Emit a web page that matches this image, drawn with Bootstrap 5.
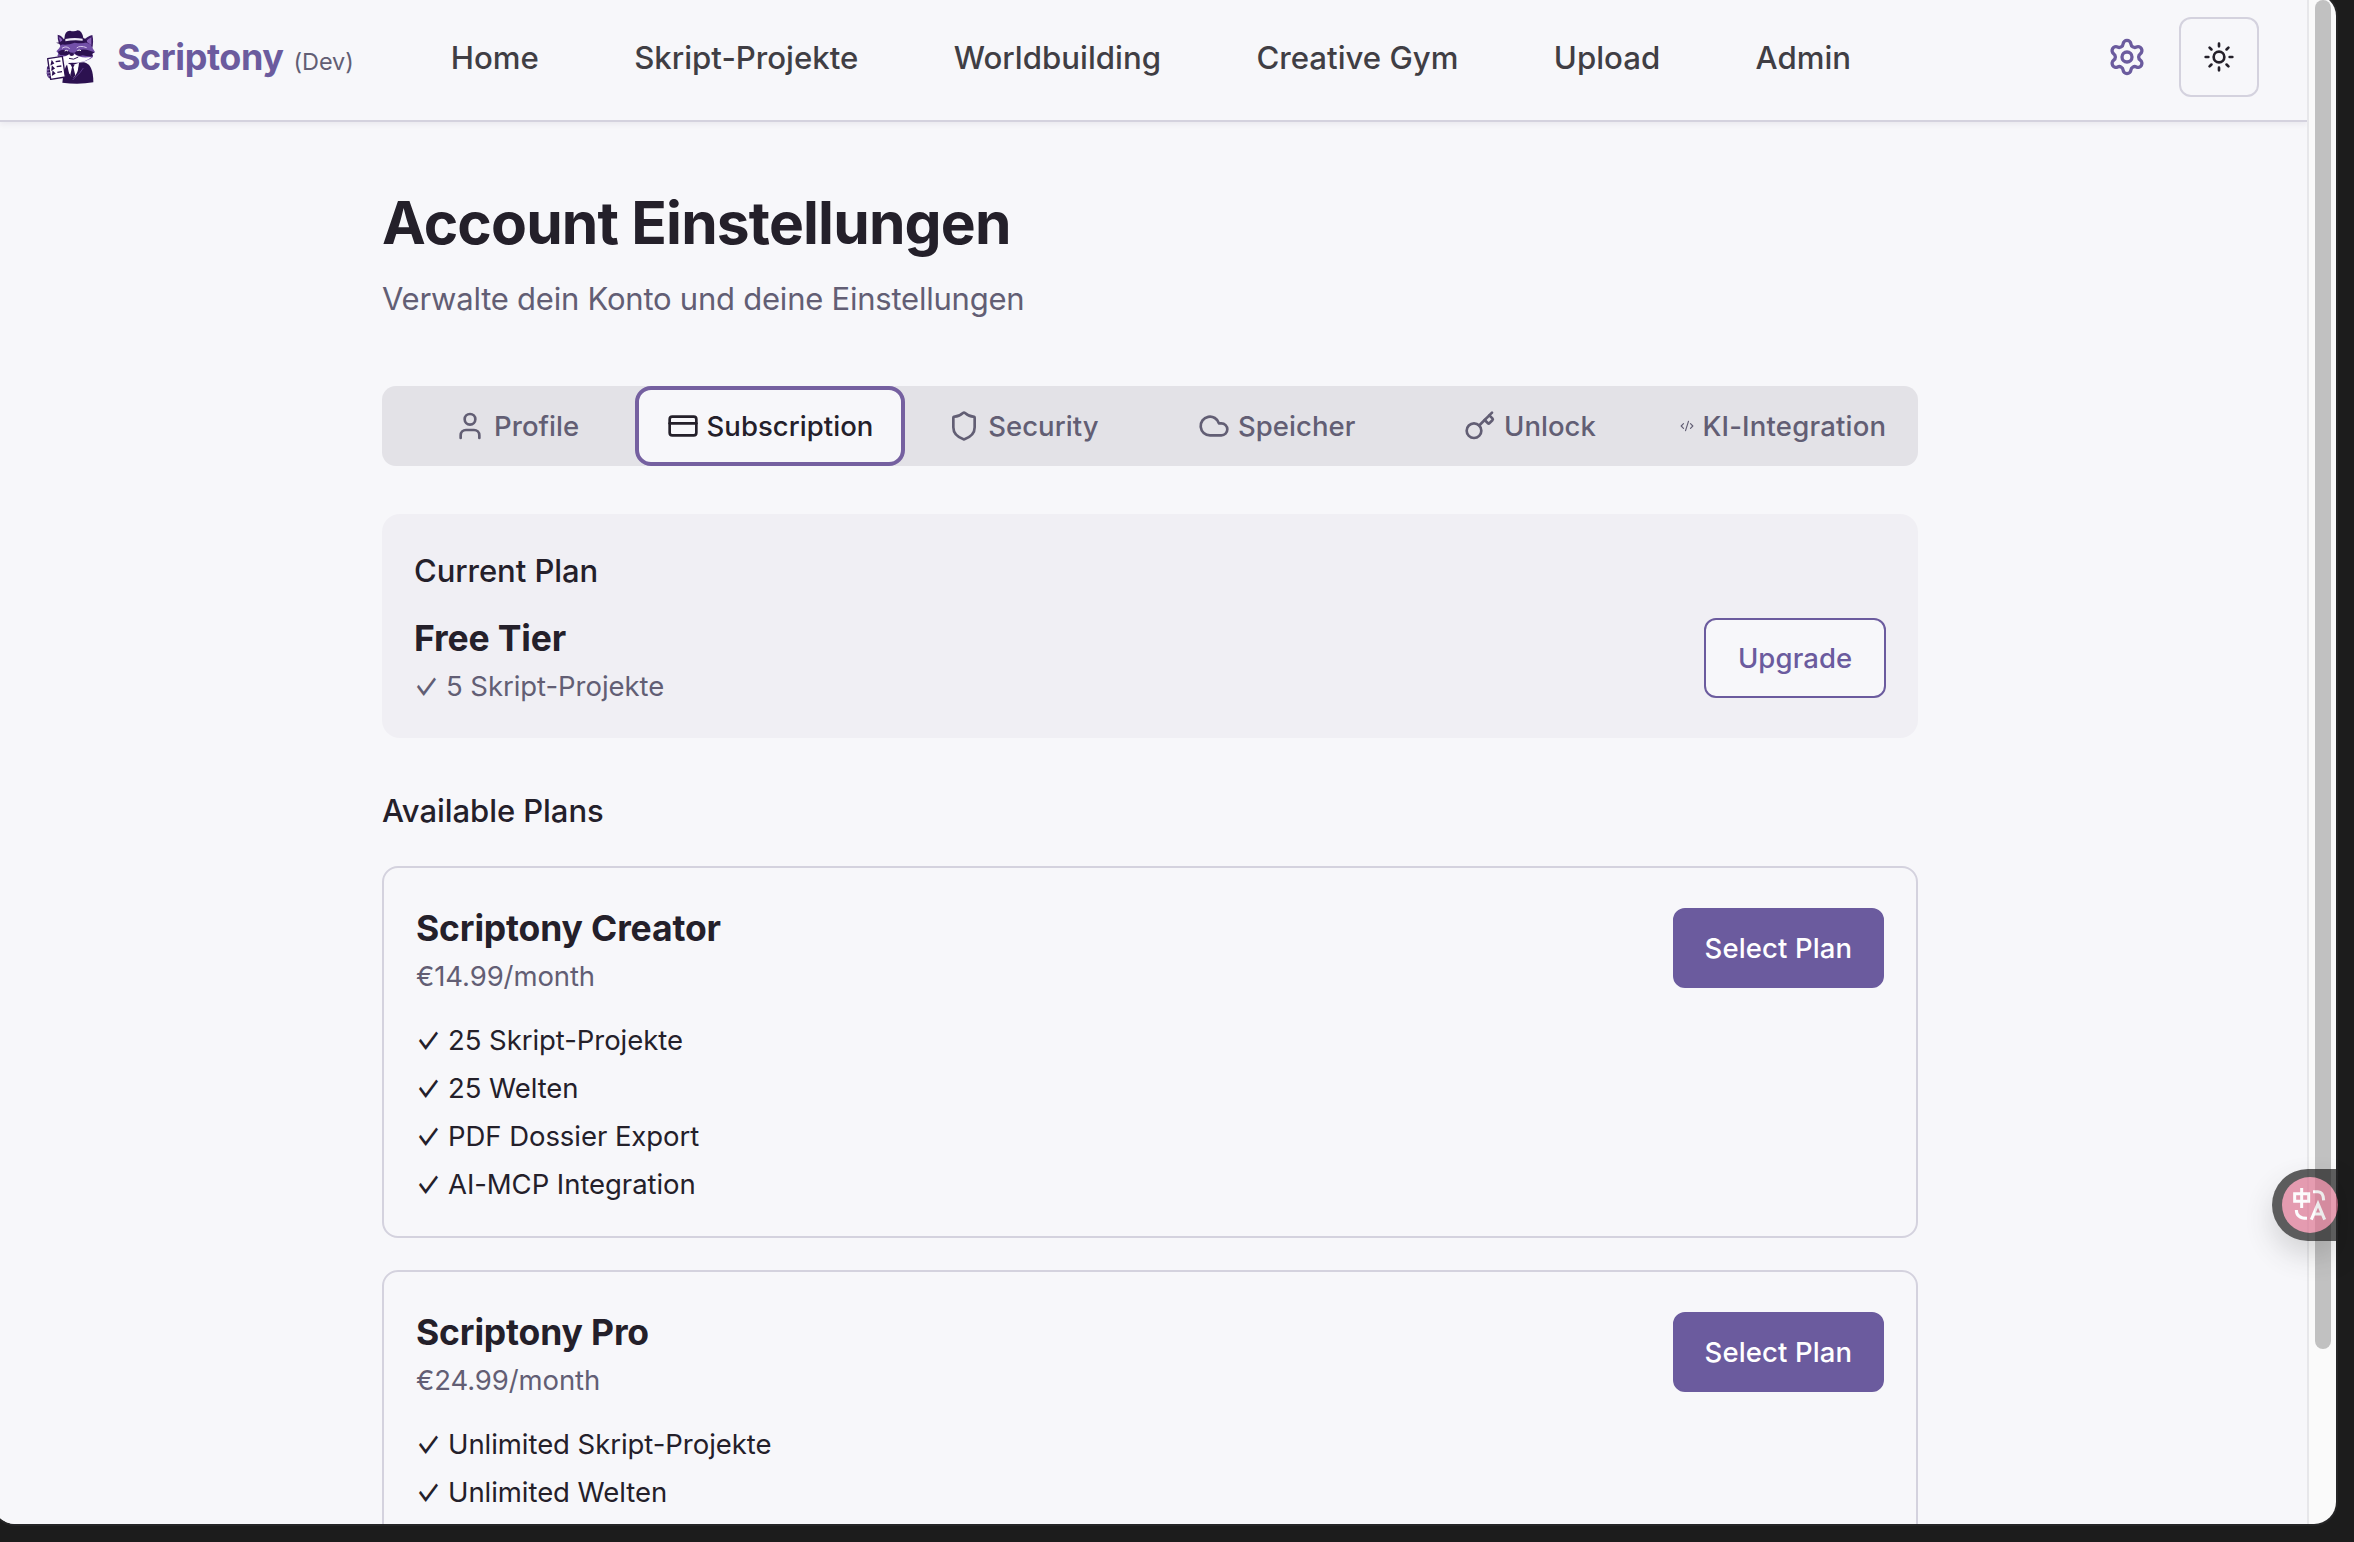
<!DOCTYPE html>
<html lang="de">
<head>
<meta charset="utf-8">
<meta name="viewport" content="width=device-width, initial-scale=1">
<title>Scriptony – Account Einstellungen</title>
<link href="https://cdn.jsdelivr.net/npm/bootstrap@5.3.0/dist/css/bootstrap.min.css" rel="stylesheet">
<style>
:root{--page:#f7f7fa;--ink:#24202a;--soft:#625e74;--accent:#6b5b9e;--line:#d4d2de}
html,body{height:100%}
body{background:#1c1c1c;color:var(--ink);font-family:Inter,"Liberation Sans",sans-serif;font-size:27.5px;line-height:40px;letter-spacing:-.05px;overflow:hidden}
.app-window{height:1530px;width:2343px;margin:-6px 0 0 -7px;padding:6px 0 0 7px;background:#fafafa;border-radius:22px;overflow:hidden;box-shadow:0 0 0 2px #252526}
.viewport-pane{width:2307px;background:var(--page);overflow:hidden}
.scroll-track{width:29px;border-left:2px solid #e7e7ea;padding-left:6px}
.scroll-thumb{width:16px;height:1349px;border-radius:8px;background:#c1c1c1}
.app-header{height:122px;padding:17px 48px 23px 46px;border-bottom:2px solid var(--line);box-shadow:0 2px 6px rgba(40,30,70,.07)}
.brand-text{padding-top:4px;margin-left:21px;width:235px}
.brand-name{font-size:36px;font-weight:700;color:var(--accent);letter-spacing:-.45px}
.brand-env{font-size:23.5px;color:var(--soft);margin-left:10px}
.main-nav{margin-left:98.7px;gap:95.4px;font-size:31.2px;padding-top:1px}
.main-nav .nav-link{padding:0;color:#403e44;font-weight:500;letter-spacing:0}
.theme-btn{width:80px;height:80px;border:2px solid var(--line);border-radius:12px;color:var(--ink);margin-left:32px}
.ic{fill:none;stroke:currentColor;stroke-width:2;stroke-linecap:round;stroke-linejoin:round;flex:none}
.ic-accent{color:var(--accent)}
main{width:1536px;margin-left:382px;padding-top:64px}
h1{font-size:58.7px;line-height:73px;font-weight:700;margin:0 0 16px;letter-spacing:-.84px}
.subtitle{font-size:31px;line-height:48px;color:var(--soft);margin:0 0 63px;letter-spacing:-.23px}
.tab-strip{height:80px;background:#e3e2e7;border-radius:14px;padding:0 6px 0 8px;margin-bottom:48px}
.tab-strip .nav-link{flex:1 1 0;min-width:0;height:80px;padding:0;gap:8px;color:var(--soft);font-weight:500;white-space:nowrap;letter-spacing:.05px}
.tab-strip .nav-link.active{margin:0 -8px;flex-basis:16px;background:var(--page);border:4px solid #7560a0;border-radius:16px;color:var(--ink)}
.tab-strip .tab-ki{letter-spacing:.2px;padding-right:2px}
.panel-current{background:#f0eff4;border-radius:18px;padding:32px;margin-bottom:48px}
h2{font-size:31px;line-height:50px;font-weight:500;margin:0 0 -2px;letter-spacing:-.05px}
h3{font-size:35.5px;line-height:58px;font-weight:700;margin:0 0 -2px;letter-spacing:-.15px}
.plan-btn{height:80px;border-radius:12px;font-size:27.5px;font-weight:500;padding:0 29.8px;border:2px solid var(--accent);line-height:40px;letter-spacing:.12px}
.plan-outline{background:var(--page);color:var(--accent);padding:0 31.6px}
.plan-solid{background:var(--accent);color:#fff}
.plan-card{background:var(--page);border:2px solid var(--line);border-radius:16px;padding:32px;margin-top:32px}
.plan-card ul{margin:24px 0 0;gap:8px}
.text-soft{color:var(--soft)}
.price{letter-spacing:-.1px}
.tick{display:inline-block;transform:scaleY(1.35);transform-origin:50% 52%}
.translate-tab{left:2272px;top:1169px;width:64px;height:72px;border-radius:36px 0 0 36px;background:#1b1b1b;opacity:.7;box-shadow:0 14px 28px rgba(0,0,0,.2)}
.translate-dot{left:10px;top:8px;width:56px;height:56px;border-radius:50%;background:#dd7592}
</style>
<script src="https://cdn.jsdelivr.net/npm/bootstrap@5.3.0/dist/js/bootstrap.bundle.min.js"></script>
</head>
<body>
<div class="app-window d-flex">
  <div class="viewport-pane">
    <header class="app-header d-flex align-items-center">
      <a class="d-flex align-items-center text-decoration-none" href="#">
        <svg width="50" height="54" viewBox="48 58 150 162" aria-label="Scriptony">
          <path d="M97 216Q101 168 116 157L162 155Q190 160 190 215Q145 223 97 216Z" fill="#2c1150"/>
          <path d="M83 72Q93 73 102 86L96 112Q82 96 83 72ZM187 73Q172 76 160 90L186 116Q192 94 187 73Z" fill="#3a1a63"/>
          <path d="M86 79Q93 80 97 88L92 98ZM184 80Q175 84 168 92L184 104Z" fill="#8a63b8"/>
          <path d="M88 112Q90 96 130 94Q184 92 186 110L195 124L187 130L189 139Q170 156 130 156Q92 146 82 136L85 128L79 122Z" fill="#7350a8"/>
          <path d="M84 123Q104 110 123 126L134 126Q152 110 180 120L194 125L186 129L189 137Q170 138 158 134Q142 140 134 128L121 128Q112 138 98 133Q86 134 84 123Z" fill="#2c1150"/>
          <path d="M86 136Q104 142 119 130Q125 126 134 131Q150 144 184 139Q168 156 132 156Q102 154 86 136Z" fill="#fff"/>
          <path d="M96 113Q108 104 119 114M140 112Q150 103 170 111" fill="none" stroke="#d9c9ec" stroke-width="3"/>
          <path d="M104 121Q109 117 114 121M142 120Q147 116 153 120" fill="none" stroke="#fff" stroke-width="3"/>
          <ellipse cx="125" cy="131" rx="7" ry="5" fill="#2c1150"/>
          <path d="M117 143Q130 150 145 139" fill="none" stroke="#2c1150" stroke-width="3"/>
          <path d="M78 96Q92 96 103 84Q104 60 120 60Q132 64 143 59Q156 60 160 82Q172 86 171 94Q160 100 134 96Q104 108 78 96Z" fill="#2c1150"/>
          <path d="M106 85Q132 79 158 84V90Q130 87 106 92Z" fill="#efeaf6"/>
          <path d="M110 156L126 164L147 156L143 190L128 202L117 188Z" fill="#fff"/>
          <path d="M122 162H134L130 170L136 194L127 204L121 192L126 170Z" fill="#2c1150"/>
          <path d="M110 160L112 178L126 210L116 205ZM150 156L142 184L128 210L150 190Z" fill="#2c1150"/>
          <path d="M160 172L150 186L128 208" fill="none" stroke="#7350a8" stroke-width="2"/>
          <path d="M51 168L60 164L66 206Q52 204 50 188Z" fill="#4b2a7a"/>
          <path d="M53 144L97 137L106 199L62 206Z" fill="#fff" stroke="#2c1150" stroke-width="4" stroke-linejoin="round"/>
          <path d="M77 153L91 151M80 168L94 166M82 185L96 183" stroke="#2c1150" stroke-width="4"/>
          <path d="M66 152l4 6-6 3zM67 168l5 5-6 4zM69 183l5 5-6 4z" fill="none" stroke="#2c1150" stroke-width="4"/>
          <path d="M50 178L59 177M51 187L60 186M54 196L62 195" stroke="#c9b4e2" stroke-width="2"/>
        </svg>
        <span class="brand-text d-flex align-items-baseline"><span class="brand-name">Scriptony</span><span class="brand-env">(Dev)</span></span>
      </a>
      <nav class="nav main-nav flex-nowrap">
        <a class="nav-link" href="#">Home</a>
        <a class="nav-link" href="#">Skript-Projekte</a>
        <a class="nav-link" href="#">Worldbuilding</a>
        <a class="nav-link" href="#">Creative Gym</a>
        <a class="nav-link" href="#">Upload</a>
        <a class="nav-link" href="#">Admin</a>
      </nav>
      <svg class="ic ic-accent ms-auto" width="40" height="40" viewBox="0 0 24 24"><path d="M9.671 4.136a2.34 2.34 0 0 1 4.659 0 2.34 2.34 0 0 0 3.319 1.915 2.34 2.34 0 0 1 2.33 4.033 2.34 2.34 0 0 0 0 3.831 2.34 2.34 0 0 1-2.33 4.033 2.34 2.34 0 0 0-3.319 1.915 2.34 2.34 0 0 1-4.659 0 2.34 2.34 0 0 0-3.32-1.915 2.34 2.34 0 0 1-2.33-4.033 2.34 2.34 0 0 0 0-3.831A2.34 2.34 0 0 1 6.35 6.051a2.34 2.34 0 0 0 3.319-1.915"/><circle cx="12" cy="12" r="3"/></svg>
      <button class="btn theme-btn p-0 d-flex align-items-center justify-content-center" aria-label="Theme"><svg class="ic" width="32" height="32" viewBox="0 0 24 24"><circle cx="12" cy="12" r="4"/><path d="M12 2v2M12 20v2M4.93 4.93l1.41 1.41M17.66 17.66l1.41 1.41M2 12h2M20 12h2M6.34 17.66l-1.41 1.41M19.07 4.93l-1.41 1.41"/></svg></button>
    </header>

    <main>
      <h1>Account Einstellungen</h1>
      <p class="subtitle">Verwalte dein Konto und deine Einstellungen</p>

      <nav class="nav tab-strip flex-nowrap">
        <a class="nav-link d-flex align-items-center justify-content-center" href="#"><svg class="ic" width="32" height="32" viewBox="0 0 24 24"><path d="M19 21v-2a4 4 0 0 0-4-4H9a4 4 0 0 0-4 4v2"/><circle cx="12" cy="7" r="4"/></svg><span>Profile</span></a>
        <a class="nav-link active d-flex align-items-center justify-content-center" href="#"><svg class="ic" width="32" height="32" viewBox="0 0 24 24"><rect x="2" y="5" width="20" height="14" rx="2"/><path d="M2 10h20"/></svg><span>Subscription</span></a>
        <a class="nav-link d-flex align-items-center justify-content-center" href="#"><svg class="ic" width="32" height="32" viewBox="0 0 24 24"><path d="M20 13c0 5-3.5 7.5-7.66 8.95a1 1 0 0 1-.67-.01C7.5 20.5 4 18 4 13V6a1 1 0 0 1 1-1c2 0 4.5-1.2 6.24-2.72a1.17 1.17 0 0 1 1.52 0C14.51 3.81 17 5 19 5a1 1 0 0 1 1 1z"/></svg><span>Security</span></a>
        <a class="nav-link d-flex align-items-center justify-content-center" href="#"><svg class="ic" width="32" height="32" viewBox="0 0 24 24"><path d="M17.5 19H9a7 7 0 1 1 6.71-9h1.79a4.5 4.5 0 1 1 0 9Z"/></svg><span>Speicher</span></a>
        <a class="nav-link d-flex align-items-center justify-content-center" href="#"><svg class="ic" width="32" height="32" viewBox="0 0 24 24"><path d="m15.5 7.5 2.3 2.3a1 1 0 0 0 1.4 0l2.1-2.1a1 1 0 0 0 0-1.4L19 4"/><path d="m21 2-9.6 9.6"/><circle cx="7.5" cy="15.5" r="5.5"/></svg><span>Unlock</span></a>
        <a class="nav-link tab-ki d-flex align-items-center justify-content-center" href="#"><svg class="ic" width="14" height="32" viewBox="0 0 24 24"><path d="m18 16 4-4-4-4M6 8l-4 4 4 4M14.5 4l-5 16"/></svg><span>KI-Integration</span></a>
      </nav>

      <section class="panel-current">
        <h2>Current Plan</h2>
        <div class="d-flex align-items-center justify-content-between mt-3">
          <div><h3>Free Tier</h3><div class="text-soft"><span class="tick">✓</span> 5 Skript-Projekte</div></div>
          <button class="btn plan-btn plan-outline">Upgrade</button>
        </div>
      </section>

      <h2>Available Plans</h2>
      <section class="plan-card">
        <div class="d-flex align-items-center justify-content-between">
          <div><h3>Scriptony Creator</h3><div class="text-soft price">€14.99/month</div></div>
          <button class="btn plan-btn plan-solid">Select Plan</button>
        </div>
        <ul class="list-unstyled d-flex flex-column">
          <li><span class="tick">✓</span> 25 Skript-Projekte</li>
          <li><span class="tick">✓</span> 25 Welten</li>
          <li><span class="tick">✓</span> PDF Dossier Export</li>
          <li><span class="tick">✓</span> AI-MCP Integration</li>
        </ul>
      </section>
      <section class="plan-card">
        <div class="d-flex align-items-center justify-content-between">
          <div><h3>Scriptony Pro</h3><div class="text-soft price">€24.99/month</div></div>
          <button class="btn plan-btn plan-solid">Select Plan</button>
        </div>
        <ul class="list-unstyled d-flex flex-column">
          <li><span class="tick">✓</span> Unlimited Skript-Projekte</li>
          <li><span class="tick">✓</span> Unlimited Welten</li>
        </ul>
      </section>
    </main>
  </div>
  <div class="scroll-track"><div class="scroll-thumb"></div></div>
</div>

<div class="translate-tab position-absolute">
  <div class="translate-dot position-absolute">
    <svg class="d-block" width="56" height="56" viewBox="0 0 168 168" fill="none" stroke="#fff" stroke-width="9"><path d="M38 50H80V73H38ZM59 33V93"/><path d="M93 44H108Q124 44 125 70"/><path d="M43 99Q43 124 75 124"/><path d="M88 128L108 80L128 128M95 111H121"/></svg>
  </div>
</div>
</body>
</html>
